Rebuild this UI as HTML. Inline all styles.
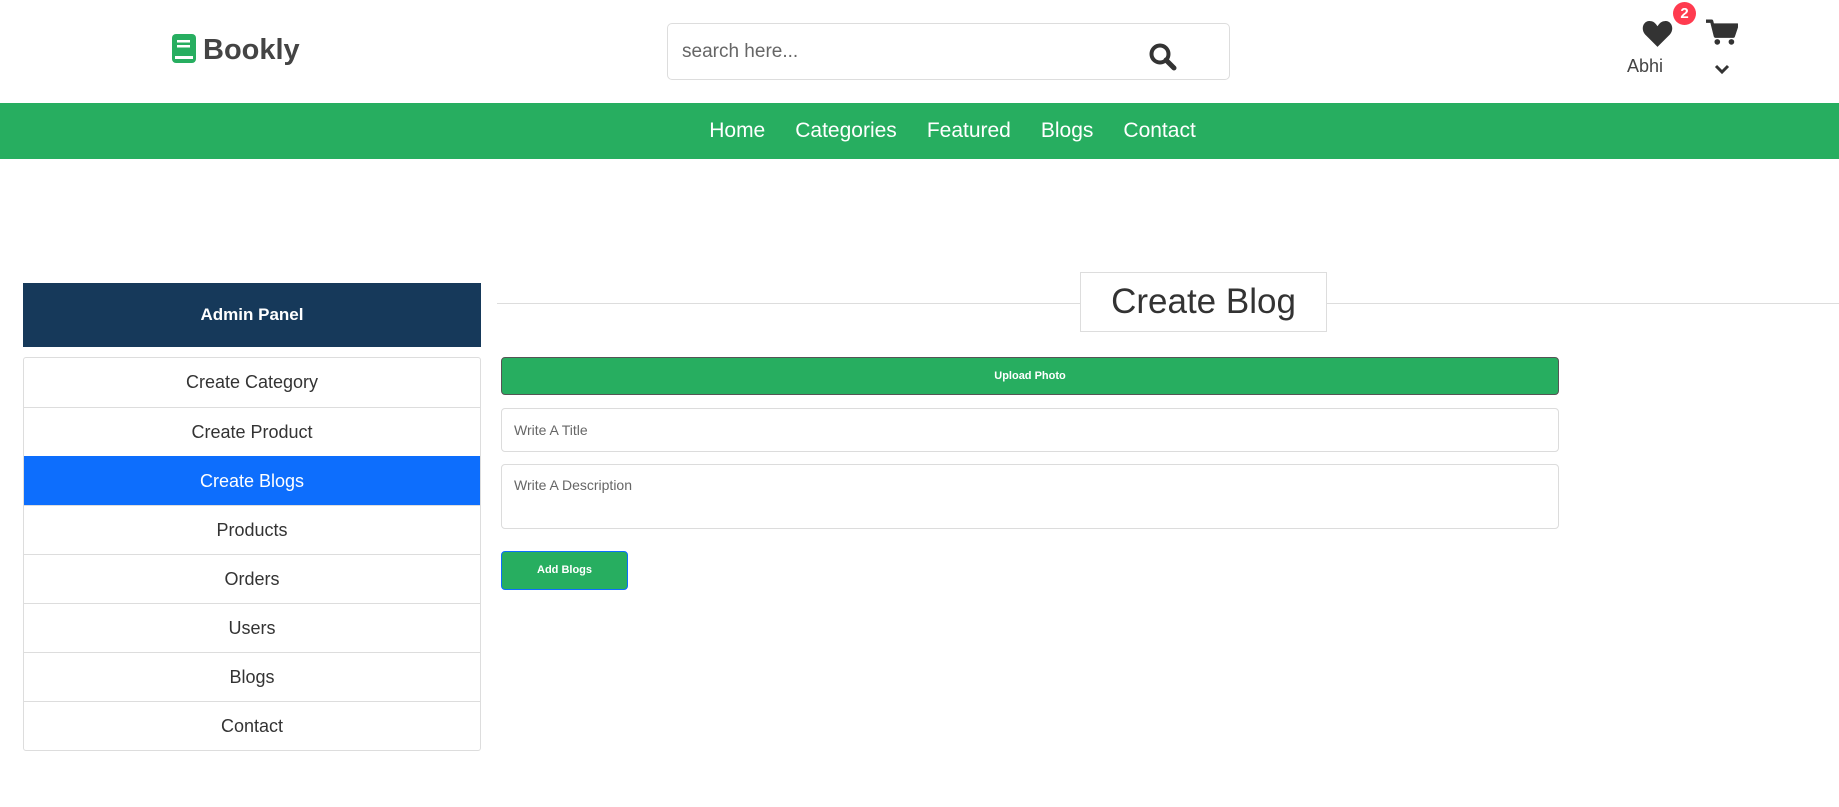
<!DOCTYPE html>
<html><head><meta charset="utf-8"><style>
*{box-sizing:border-box;margin:0;padding:0}
body{width:1839px;height:807px;background:#fff;font-family:"Liberation Sans",sans-serif;color:#333;position:relative;overflow:hidden}
.abs{position:absolute}
.nav{top:103px;left:0;width:1839px;height:56px;background:#27ae60;display:flex;justify-content:center;align-items:center;gap:30px;padding-left:66px}
.nav span{color:#fff;font-size:21px}
.side{left:23px;top:283px;width:458px}
.sh{height:64px;background:#16395a;color:#fff;font-weight:bold;font-size:17px;display:flex;align-items:center;justify-content:center}
.list{margin-top:10px;border:1px solid #ddd;border-radius:3px}
.list div{height:49px;display:flex;align-items:center;justify-content:center;font-size:18px;color:#333;border-top:1px solid #ddd}
.list div:first-child{border-top:none}
.list .act{background:#0d6efd;color:#fff;border-color:#0d6efd}
.inp{border:1px solid #dcdcdc;border-radius:4px;left:501px;width:1058px;color:#666;font-size:14px;padding-left:12px}
</style></head><body>
<svg class="abs" style="left:172px;top:34px" width="24" height="29" viewBox="0 0 24 29"><rect width="24" height="29" rx="4" fill="#27ae60"/><rect x="5" y="6" width="13" height="2.5" fill="#fff"/><rect x="5" y="11" width="13" height="2.5" fill="#fff"/><rect x="3" y="22" width="18" height="3" fill="#fff"/></svg>
<div class="abs" style="left:203px;top:34px;font-size:29px;font-weight:bold;color:#444">Bookly</div>
<div class="abs" style="left:667px;top:23px;width:563px;height:57px;border:1px solid #ddd;border-radius:5px"></div>
<div class="abs" style="left:682px;top:41px;font-size:19px;color:#666">search here...</div>
<svg class="abs" style="left:1148px;top:42px" width="30" height="30" viewBox="0 0 30 30"><circle cx="12" cy="12" r="8.5" fill="none" stroke="#333" stroke-width="4"/><line x1="18" y1="18" x2="26" y2="26" stroke="#333" stroke-width="5" stroke-linecap="round"/></svg>
<svg class="abs" style="left:1642px;top:20px" width="31" height="27" viewBox="0 0 30 26"><path d="M15 26 L3 14 C-2 8 2 0 8 1 C11 1 13 3 15 6 C17 3 19 1 22 1 C28 0 32 8 27 14 Z" fill="#333"/></svg>
<div class="abs" style="left:1673px;top:2px;width:23px;height:23px;border-radius:50%;background:#ff3b4f;color:#fff;font-size:15px;font-weight:bold;text-align:center;line-height:23px">2</div>
<div class="abs" style="left:1627px;top:56px;font-size:18px;color:#444">Abhi</div>
<svg class="abs" style="left:1706px;top:18px" width="32" height="29" viewBox="0 0 34 28"><path d="M0 2 H6 L10 18 H29 L33 6 H8" fill="none" stroke="#333" stroke-width="3.5" stroke-linejoin="round"/><path d="M8 6 H33 L29 18 H10 Z" fill="#333"/><circle cx="12" cy="24" r="3" fill="#333"/><circle cx="27" cy="24" r="3" fill="#333"/></svg>
<svg class="abs" style="left:1714px;top:63px" width="16" height="12" viewBox="0 0 16 12"><path d="M2 3 L8 9 L14 3" fill="none" stroke="#333" stroke-width="3"/></svg>
<div class="abs nav"><span>Home</span><span>Categories</span><span>Featured</span><span>Blogs</span><span>Contact</span></div>
<div class="abs side"><div class="sh">Admin Panel</div>
<div class="list"><div>Create Category</div><div>Create Product</div><div class="act">Create Blogs</div><div>Products</div><div>Orders</div><div>Users</div><div>Blogs</div><div>Contact</div></div></div>
<div class="abs" style="left:497px;top:303px;width:1342px;height:1px;background:#ddd"></div>
<div class="abs" style="left:1080px;top:272px;width:247px;height:60px;border:1px solid #ddd;background:#fff;font-size:35px;color:#333;text-align:center;line-height:58px">Create Blog</div>
<div class="abs" style="left:501px;top:357px;width:1058px;height:38px;background:#27ae60;border:1px solid #555;border-radius:4px;color:#fff;font-size:11px;font-weight:bold;text-align:center;line-height:36px">Upload Photo</div>
<div class="abs inp" style="top:408px;height:44px;line-height:42px">Write A Title</div>
<div class="abs inp" style="top:464px;height:65px;padding-top:12px">Write A Description</div>
<div class="abs" style="left:501px;top:551px;width:127px;height:39px;background:#27ae60;border:1px solid #0d6efd;border-radius:4px;color:#fff;font-size:11px;font-weight:bold;text-align:center;line-height:37px">Add Blogs</div>
</body></html>
